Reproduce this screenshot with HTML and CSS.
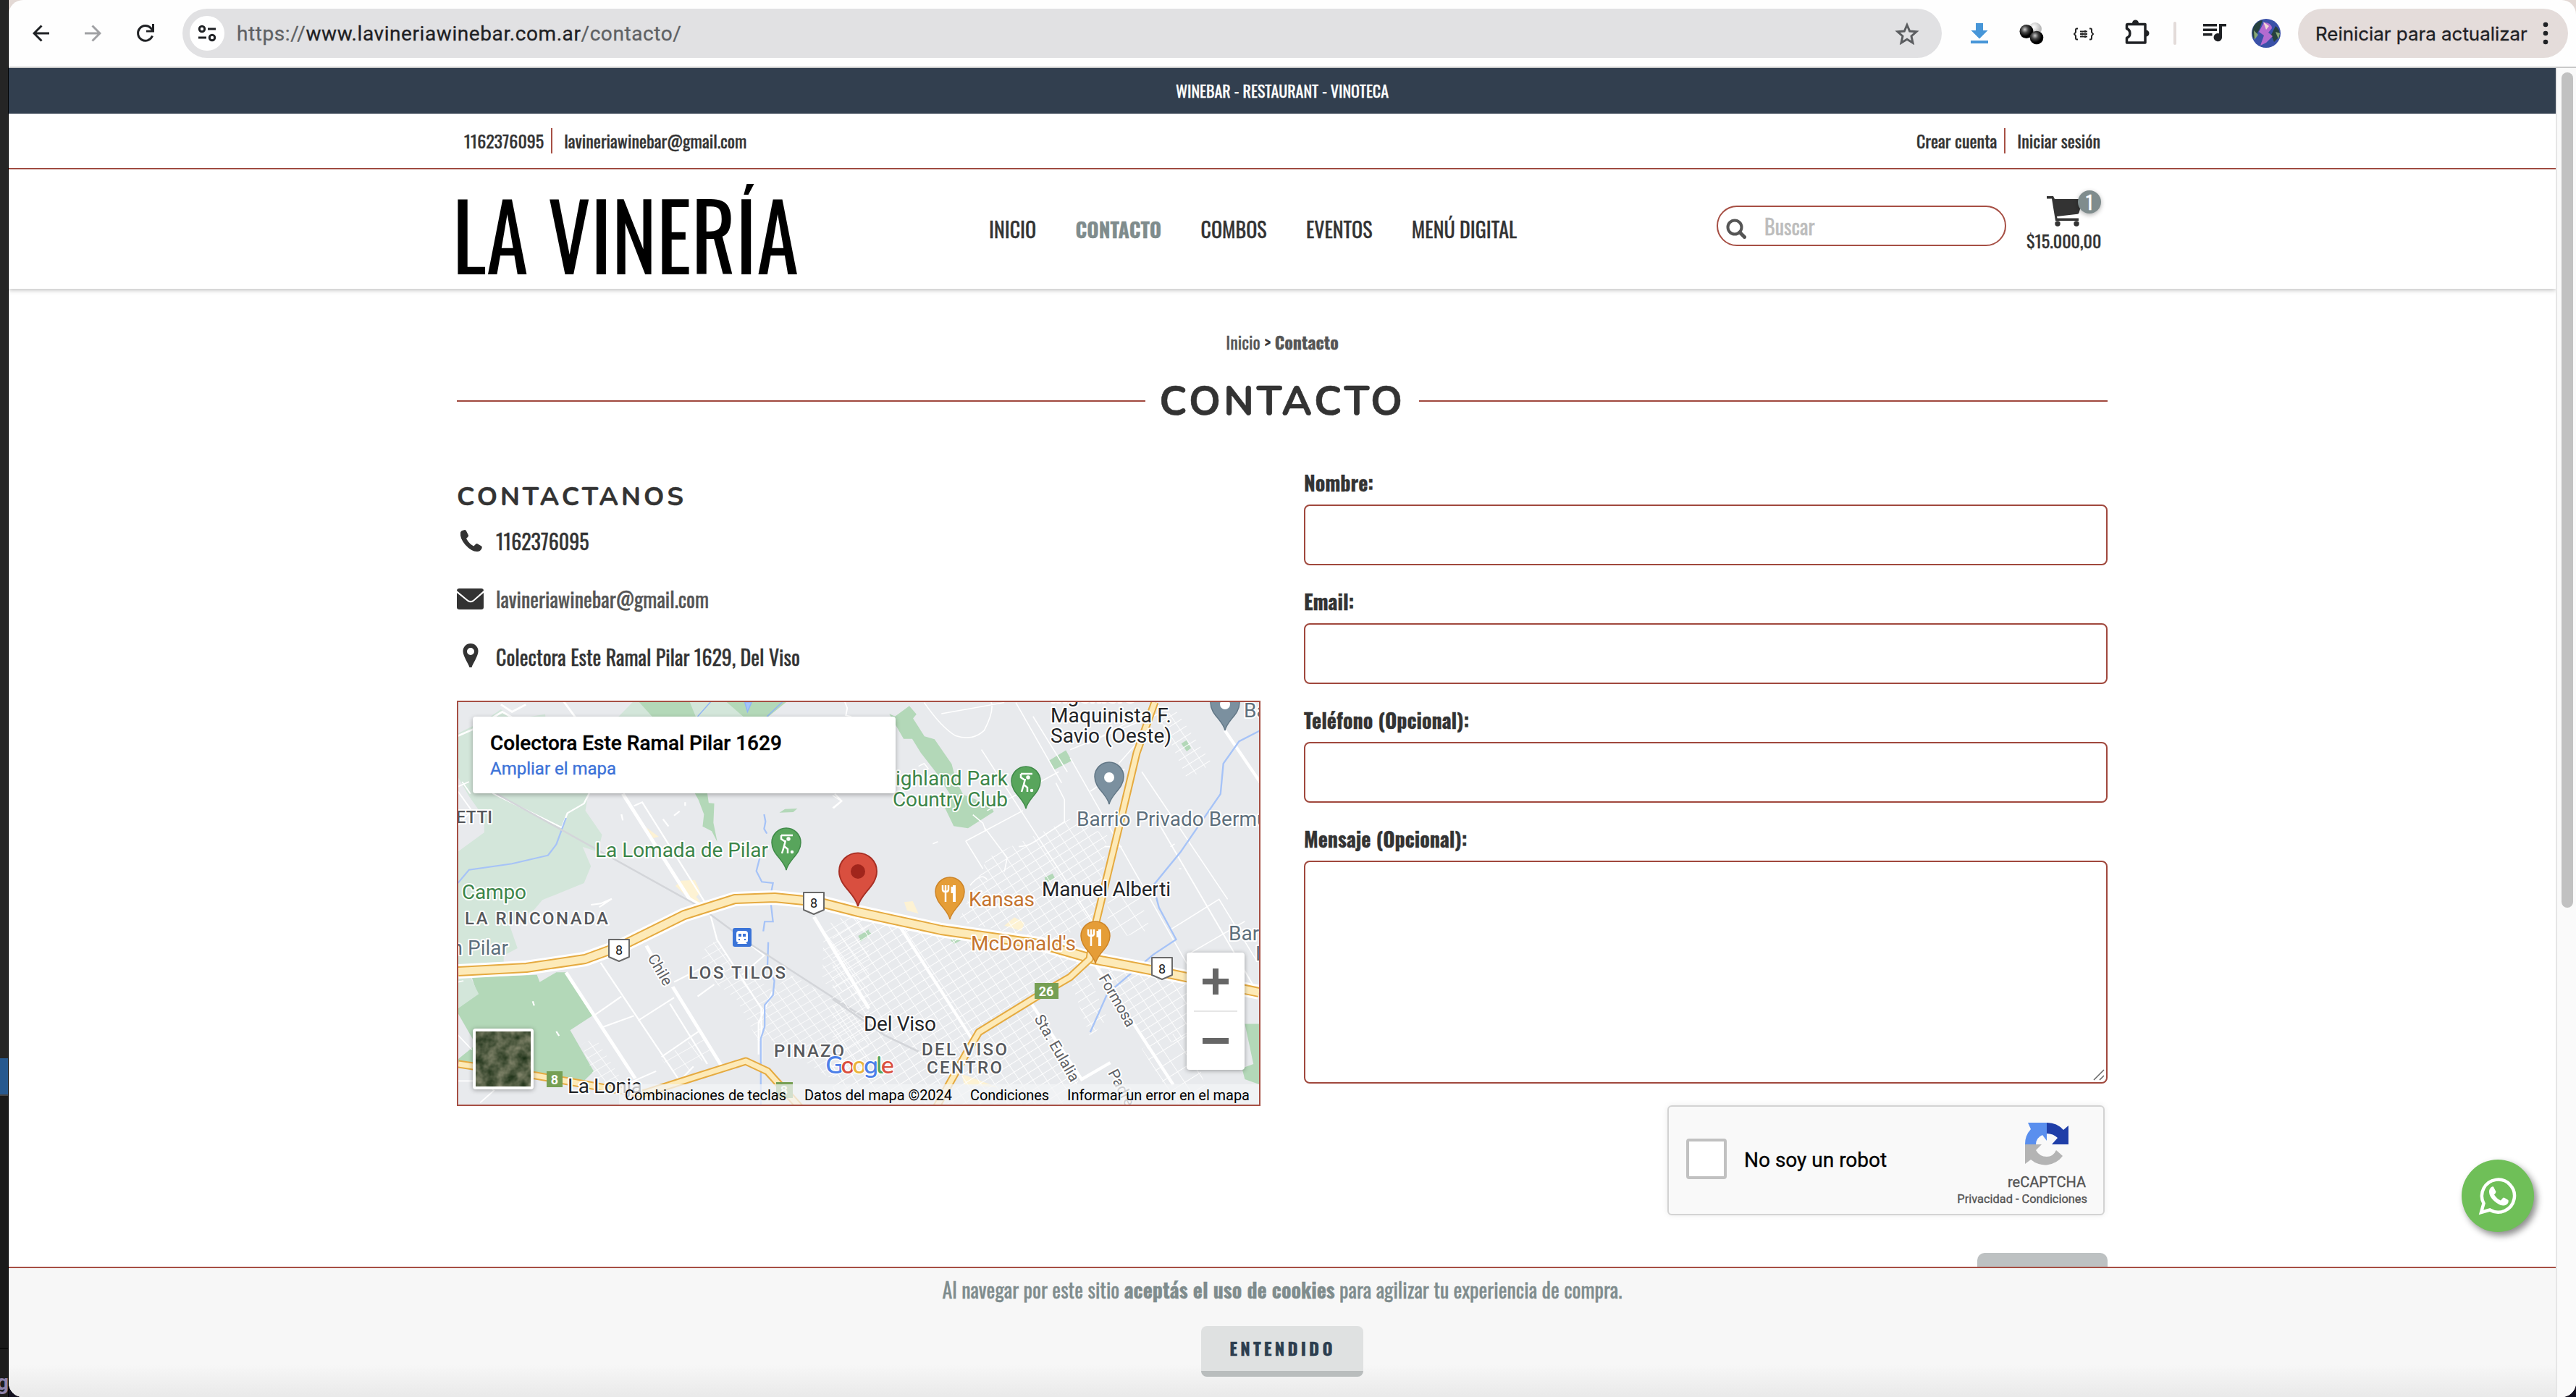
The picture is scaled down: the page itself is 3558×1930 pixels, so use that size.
FILE: index.html
```html
<!DOCTYPE html>
<html lang="es">
<head>
<meta charset="utf-8">
<title>Contacto - La Vinería</title>
<link rel="stylesheet" href="styles.css">
</head>
<body>
<aside class="desktop"><div class="desktop-top"></div><div class="desktop-blue"></div><div class="desktop-mid"></div><div class="desktop-foot">g</div></aside>
<div class="window">
  <div class="toolbar">
    <svg class="ic back" viewBox="0 0 24 24"><path d="M23 12H3M12.500 1.500L2 12l10.500 10.500" fill="none" stroke="#1f2124" stroke-width="3"/></svg>
    <svg class="ic fwd" viewBox="0 0 24 24"><path d="M1 12h20M11.500 1.500L22 12 11.500 22.500" fill="none" stroke="#a0a1a4" stroke-width="3"/></svg>
    <svg class="ic reload" viewBox="0 0 26 26"><path d="M22.500 16.500A10.300 10.300 0 1 1 20.500 6L23 9" fill="none" stroke="#1f2124" stroke-width="3"/><path d="M25 0v11.500H14V8.700h8V0z" fill="#1f2124"/></svg>
    <div class="omnibox">
      <span class="chip"><svg width="26" height="24" viewBox="0 0 26 24" fill="none" stroke="#1f2124" stroke-width="3"><circle cx="6" cy="6" r="3.700"/><path d="M14 6h11M1 18h11"/><circle cx="20" cy="18" r="3.700"/></svg></span>
      <span class="url">https://<b>www.lavineriawinebar.com.ar</b>/contacto/</span>
      <svg class="star" viewBox="0 0 34 32"><path d="M17 4.500l3.700 8.500 9.300.8-7 6.200 2 9.200-8-4.900-8 4.900 2-9.200-7-6.200 9.300-.8z" fill="none" stroke="#5b5d60" stroke-width="3"/></svg>
    </div>
    <svg class="exts" viewBox="2682 0 492 92">
      <defs><radialGradient id="bk" cx=".38" cy=".35"><stop offset="0" stop-color="#ccc"/><stop offset=".5" stop-color="#444"/><stop offset="1" stop-color="#000"/></radialGradient>
      <radialGradient id="wt" cx=".4" cy=".35"><stop offset="0" stop-color="#fff"/><stop offset="1" stop-color="#bbb"/></radialGradient></defs>
      <path d="M2729 32h10v10h6.500L2734 53.500 2722.500 42h6.500zM2722 56h24v4h-24z" fill="#4796d8"/>
      <circle cx="2811" cy="40" r="9" fill="url(#wt)"/><circle cx="2799" cy="43.500" r="9.500" fill="url(#bk)"/><circle cx="2813" cy="52" r="9.300" fill="url(#bk)"/>
      <g fill="none" stroke="#222" stroke-width="2"><path d="M2870 39.500h-1.500q-1.500 0-1.500 2v3l-2 2.500 2 2.500v3q0 2 1.500 2h1.500M2886 39.500h1.500q1.500 0 1.500 2v3l2 2.500-2 2.500v3q0 2-1.500 2h-1.500M2873 43.500h10M2873 47h10M2873 50.500h10"/><path d="M2880 42v3M2876 45.500v3M2880 49v3"/></g>
      <path d="M2939 33.500h24v25.500h-25.500v-6.500a7 7 0 0 0 0-13v-4.500q0-1.500 1.500-1.500z" fill="none" stroke="#1f2124" stroke-width="3.500" stroke-linejoin="round"/><path d="M2945 32a4.500 4.500 0 0 1 9 0zM2964 41.500a4.500 4.500 0 0 1 0 9z" fill="#1f2124"/>
      <rect x="3002" y="30" width="4" height="32" rx="2" fill="#e3dbd9"/>
      <path d="M3043 33h19v3.500h-19zM3043 39.500h19v3.500h-19zM3043 46h12.500v3.500H3043zM3065 33h10v3.500h-6v15a5.700 5.700 0 1 1-4-5.300z" fill="#1f2124"/>
      <circle cx="3130" cy="46" r="20" fill="#3a51a8"/><path d="M3113 36q6-8 12-8l-4 12-8 14q-4-9 0-18zM3143 36q6 4 6 14l-8 8-4-10z" fill="#26413f"/><path d="M3127 31q10 0 11 8l-5 6 6 5-9 9-8 4 5-14-7-5z" fill="#b46bd0"/><path d="M3126 30l8 6-4 5z" fill="#f0d6d4"/><path d="M3113 42l6 6-5 7zM3143 44l6 2-2 8z" fill="#88a878"/>
    </svg>
    <div class="update"><span>Reiniciar para actualizar</span><svg width="8" height="32" viewBox="0 0 8 32" fill="#1f2124"><circle cx="4" cy="4" r="3.300"/><circle cx="4" cy="16" r="3.300"/><circle cx="4" cy="28" r="3.300"/></svg></div>
  </div>

  <div class="viewport">
    <div class="page">
      <div class="promo">WINEBAR - RESTAURANT - VINOTECA</div>
      <div class="topbar"><div class="inner">
        <div class="links"><a>1162376095</a><a>lavineriawinebar@gmail.com</a></div>
        <div class="links"><a>Crear cuenta</a><a>Iniciar sesión</a></div>
      </div></div>
      <header class="header"><div class="inner">
        <svg class="logo" viewBox="0 0 472 125"><text x="-6" y="125" textLength="478" lengthAdjust="spacingAndGlyphs">LA VINERÍA</text></svg>
        <nav class="nav"><a>INICIO</a><a class="active">CONTACTO</a><a>COMBOS</a><a>EVENTOS</a><a>MENÚ DIGITAL</a></nav>
        <div class="search"><svg width="28" height="28" viewBox="0 0 28 28" fill="none" stroke="#555" stroke-width="4"><circle cx="12" cy="12" r="9.500"/><path d="M19 19l6.500 6.500" stroke-width="5" stroke-linecap="round"/></svg><span>Buscar</span></div>
        <div class="cart">
          <svg width="50" height="42" viewBox="0 0 50 42" fill="#333"><path d="M0 0h9l2 4h37q2 0 1.500 2l-5 17q-.5 1.500-2 1.700L14 28l.5 2.500H44V34H12L7 3.500H0z"/><circle cx="15" cy="38" r="3.700"/><circle cx="41" cy="38" r="3.700"/></svg>
          <span class="badge">1</span><span class="total">$15.000,00</span>
        </div>
      </div></header>

      <main class="inner main">
        <div class="crumbs"><a>Inicio</a> &gt; <b>Contacto</b></div>
        <h1 class="title"><span>CONTACTO</span></h1>
        <div class="cols">
          <section>
            <h2 class="subtitle">CONTACTANOS</h2>
            <div class="row"><svg viewBox="0 0 38 38"><path d="M5 8q0-3 6-4 1.500 0 2 1.500l3 6q.5 1.500-3 4.500 4.500 8 10.500 10.500 3-4 4.500-3.500l6 3.500q1.500 1 0 4-2 3.500-6 3.500Q20 34 11.500 24.500 4 15.500 5 8z"/></svg><span>1162376095</span></div>
            <div class="row mail"><svg viewBox="0 0 38 38"><path d="M3.500 5h30Q37 5 37 8L23 20.500q-4 3-8 0L0 8q0-3 3.500-3zM0 11l15 12q4 2.500 8 0L37 11v20q0 3-3.500 3h-30Q0 34 0 31z"/></svg><span>lavineriawinebar@gmail.com</span></div>
            <div class="row"><svg viewBox="0 0 38 38"><path fill-rule="evenodd" d="M19 1a10.500 10.500 0 0 1 10.500 11C29.500 18 22 29 20.500 34h-3C16 29 8.500 18 8.500 12A10.500 10.500 0 0 1 19 1zm0 6a5 5 0 1 0 0 10 5 5 0 0 0 0-10z"/></svg><span>Colectora Este Ramal Pilar 1629, Del Viso</span></div>

            <div class="map">
            <svg class="map-canvas" viewBox="633 970 1106 556">
              <defs>
                <path id="pin" d="M0 0C-3-14-20-22-20-38A20 20 0 1 1 20-38C20-22 3-14 0 0Z"/>
                <pattern id="g1" width="40" height="30" patternUnits="userSpaceOnUse" patternTransform="rotate(-33)"><path d="M0 0H40M0 0V30" fill="none" stroke="#fff" stroke-width="4.500"/></pattern>
                <pattern id="g2" width="60" height="46" patternUnits="userSpaceOnUse" patternTransform="rotate(-33)"><path d="M0 0H60M0 0V46" fill="none" stroke="#fff" stroke-width="4.500"/></pattern>
                <filter id="nz" x="0" y="0" width="1" height="1" color-interpolation-filters="sRGB"><feTurbulence type="fractalNoise" baseFrequency=".07" numOctaves="3" seed="4"/><feColorMatrix values=".6 0 0 0 .03 .5 0 0 0 .12 .5 0 0 0 .02 0 0 0 0 1"/></filter>
              </defs>
              <rect x="633" y="970" width="1106" height="556" fill="#e8eaed"/>
              <!-- parks, north-west -->
              <g transform="translate(600 640) scale(.3827 .3333)">
                <path d="M660 1055L720 985H1270L1200 1055z" fill="#d3e6da"/><path d="M735 985H920L945 1055H790zM1050 985H1275L1200 1055H1120z" fill="#b3d8b8"/>
                <path d="M85 1120L190 1060 240 1020 290 1060 400 1040 420 1380H85z" fill="#d3e6da"/>
                <path d="M240 1000l40 30 50-30M85 1130l60-30 100-70 60 40M465 985l45 70M85 1280l60 30" fill="none" stroke="#fff" stroke-width="8"/>
                <path d="M1120 990h25l-15 40zM1000 985l-50 65M1260 985l-60 65" fill="#a3c4fa" stroke="#90b4f4" stroke-width="4"/>
                <path d="M1480 985l10 30-5 30 20 5" fill="none" stroke="#fff" stroke-width="5"/>
              </g>
              <g transform="translate(600 1080) scale(.3827 .3333)">
                <path d="M85-60H570L545 120 605 220 590 290 535 270 565 350 540 420 390 490 360 530 270 590 300 690 250 720V770H85z" fill="#d3e6da"/>
                <path d="M85 -20L125 60 180 150V210L85 290z" fill="#e8eaed"/>
                <path d="M85 930L155 880 135 810 370 800 380 830 440 790 475 790 570 970 490 1030 575 1200 540 1240 85 1170z" fill="#b3d8b8"/>
                <path d="M85 940L160 880 130 810H85z" fill="#d3e6da"/><path d="M85 960L150 1090 85 1150z" fill="#e8eaed"/>
                <path d="M940 48h45l5 40 20 2-3 80 14 80-20-45-33-20 5-50-20-60zM1245 128l20-15 45-2-15 15zM1530 640l38-28v28l-30 22z" fill="#b3d8b8"/>
                <path d="M890 410l50-3 20 50-15 20 30 40-40-15-65-70zM765 190l45 38-20 5z" fill="#fdf2d3"/>
                <path d="M1405 600L1568 500V1000L1530 900 1400 830z" fill="url(#g1)"/>
                <path d="M955 710L1020 655 1080 760 1220 860 1290 800 1568 990V1200L1430 1230 1200 1060 1170 1080 1090 900 1020 840z" fill="url(#g1)"/>
                <path d="M530 1090L580 1060 690 1260H590z" fill="url(#g1)"/><path d="M900 1090L960 1040 1010 1120 880 1230 820 1150z" fill="url(#g2)"/>
                <path d="M85 40l50 80-50 60M85 20l40-20M100 0l30 50M85 1050l50 60M85 1240h90l40 40-50 50M85 830l20-5" fill="none" stroke="#fff" stroke-width="5"/>
                <path d="M475 790L725 1230M860 850L1040 1185M765 680L785 720M680 50L920 485 980 525M1370 560L1568 940" fill="none" stroke="#fff" stroke-width="13"/>
                <path d="M720 100l30-15 240 440 30 130 160 285v220M600 750L885 1240M575 970l100-80M735 990l130-95M600 1020l120-50M850 920L985 1170M820 1140l140-110M885 1240l50-60M865 830l120-70M950 890l60-50M1145 680l45 40-80 80M1220 870l-50 130v130M700 1250l100-50M1440 110l30-30-25-30M210 48L460 190l20-60 60-40 20-45M565 510l35-5 40-20-45 35M675 135l5 25M905 85v15M865 140l20-18M825 155l20 30M355 910l5 18M440 1035l10 18" fill="none" stroke="#fff" stroke-width="6"/>
                <path d="M85 420L125 365 280 340 410 305 440 260 475 150M1190 135l5 30-5 30 10 20M1180 290l-18 80 20 45 40 5-10 60 10 100-30 0-5 40M1205 665l-3 100 25 60-5 60-30 40v90l-14 50v275" fill="none" stroke="#a6c3f7" stroke-width="6"/>
                <path d="M225 50L960 520 1150 680 1568 990" fill="none" stroke="#d3d5d9" stroke-width="7"/>
              </g>
              <g transform="translate(1150 940) scale(.3954 .3827)">
                <path d="M218 130l50-38 25 30-12 15 40 65 35 10 60 90 15 60 25 50 75 30 12-8 20 40-90 60-50-8-35-75 25-35-45-75-60-80-30-50h-30l-50-90z" fill="#b3d8b8"/>
                <path d="M755 290l60-38 20 38-60 32zM1218 228l18-12 16 28-15 12zM740 712l28-15 8 15-28 20zM90 922l35-18 10 10-35 26zM412 938l60-25 3 10-50 28zM1440 1240h55v220l-55-20-10-40 40-15z" fill="#b3d8b8"/>
                <path d="M250 800l30-3 20 45-40-12zM600 885l35-30 35 20-10 30zM450 1420l130 50-120-10z" fill="#fdf2d3"/>
                <path d="M0 900L60 860 230 880 400 910 640 930 880 1000 830 1075 520 1265 400 1500 330 1530H0z" fill="url(#g1)"/>
                <path d="M540 640L830 500 960 560 940 720 900 880 760 940 440 870z" fill="url(#g1)"/>
                <path d="M530 1280L700 1170 860 1440 830 1530H400z" fill="url(#g1)"/><path d="M830 1080L880 1030 960 1220 900 1290z" fill="url(#g1)"/>
                <path d="M920 1020L1115 1050 1240 1080V1290L1100 1330 1050 1240z" fill="url(#g1)"/><path d="M1080 1330L1240 1250 1320 1530H1200z" fill="url(#g2)"/>
                <path d="M960 760L1060 740 1110 900 960 940z" fill="url(#g2)"/>
                <path d="M1140 130L1200 110 1325 300 1240 360z" fill="url(#g1)"/>
                <path d="M1130 500L1480 1120" fill="none" stroke="#fff" stroke-width="5"/>
                <path d="M230 880L490 1300M690 1160L870 1440 970 1380M920 1030L1190 1460M1370 180L1495 370" fill="none" stroke="#fff" stroke-width="11"/>
                <path d="M320 80q60 90 110 120 60 20 100-20 40-80 20-110M520 250l400 640M380 120L600 80M540 470l250-140M465 580l60 100M465 580l200-110M600 690l10-50-80-110M650 600q30 0 60-20l100-70V430l-30-60M830 250l310-130M830 280l450 820M1080 330l300 460M900 400l120-80M1000 300l60-70M1140 90l-250 140M640 80l160 290M700 130l120 200M300 310l20-10 15 20M350 590l18-8M490 485l35 30 10 30M480 740q40-50 60-20M0 415l30 20-30 25M950 600h60M1180 600l15-10M1210 680h8M1180 900l170-110 130 220M1240 990l200-120" fill="none" stroke="#fff" stroke-width="4"/>
                <path d="M1495 180L1420 220 1365 300 1355 410 1215 620 1120 740 1140 820 1200 935 1120 990 960 1130 900 1270" fill="none" stroke="#a6c3f7" stroke-width="6"/>
                <path d="M0 1150L180 1280 300 1340" fill="none" stroke="#d3d5d9" stroke-width="7"/>
              </g>
              <!-- highways -->
              <g fill="none" stroke-linejoin="round">
                <g><path d="M633 1342L727 1337 808 1325 860 1306 945 1264 1015 1242 1070 1240 1130 1246 1185 1260 1300 1285 1440 1305 1510 1325 1610 1344 1739 1371" stroke="#fff" stroke-width="20"/><path d="M633 1342L727 1337 808 1325 860 1306 945 1264 1015 1242 1070 1240 1130 1246 1185 1260 1300 1285 1440 1305 1510 1325 1610 1344 1739 1371" stroke="#e5aa40" stroke-width="14"/><path d="M633 1342L727 1337 808 1325 860 1306 945 1264 1015 1242 1070 1240 1130 1246 1185 1260 1300 1285 1440 1305 1510 1325 1610 1344 1739 1371" stroke="#fdeab8" stroke-width="10"/></g>
                <path d="M1595 970L1570 1040 1545 1145 1510 1290 1505 1325 1478 1350 1430 1378 1352 1426 1336 1453 1293 1530M633 1470L740 1486 830 1502 888 1511 960 1488 1030 1466 1060 1480 1105 1530" stroke="#e5aa40" stroke-width="11"/>
                <path d="M1595 970L1570 1040 1545 1145 1510 1290 1505 1325 1478 1350 1430 1378 1352 1426 1336 1453 1293 1530M633 1470L740 1486 830 1502 888 1511 960 1488 1030 1466 1060 1480 1105 1530" stroke="#fdeab8" stroke-width="7"/>
              </g>
              <!-- road shields -->
              <g class="shield">
                <path d="M841 1298h28v24l-14 6-14-6z"/><path d="M1110 1233h28v24l-14 6-14-6z"/><path d="M1591 1323h28v24l-14 6-14-6z"/>
              </g>
              <g class="num"><text x="855" y="1319">8</text><text x="1124" y="1254">8</text><text x="1605" y="1345">8</text></g>
              <path d="M1429 1358h33v22h-33zM755 1480h22v22h-22zM1072 1495h23v22h-23z" fill="#769f54"/>
              <g class="num green"><text x="1445" y="1376">26</text><text x="766" y="1498">8</text><text x="1083" y="1513">8</text></g>
              <!-- place labels -->
              <g class="town">
                <text x="1451" y="970" textLength="118">Ingeniero</text><text x="1451" y="998" textLength="167">Maquinista F.</text><text x="1451" y="1026" textLength="167">Savio (Oeste)</text>
                <text x="1439" y="1238" textLength="178">Manuel Alberti</text><text x="1193" y="1424" textLength="100">Del Viso</text><text x="784" y="1510" textLength="103">La Lonja</text>
              </g>
              <g class="area"><text x="597" y="1137" textLength="83">CHETTI</text><text x="642" y="1277" textLength="198">LA RINCONADA</text><text x="951" y="1352" textLength="134">LOS TILOS</text><text x="1069" y="1460" textLength="97">PINAZO</text><text x="1273" y="1458" textLength="118">DEL VISO</text><text x="1280" y="1483" textLength="104">CENTRO</text></g>
              <g class="park"><text x="1217" y="1085" textLength="175">Highland Park</text><text x="1233" y="1114" textLength="159">Country Club</text><text x="822" y="1184" textLength="239">La Lomada de Pilar</text><text x="638" y="1242" textLength="89">Campo</text></g>
              <g class="gray"><text x="1487" y="1141">Barrio Privado Bermudas</text><text x="1718" y="991">Barrio</text><text x="1697" y="1299">Barrio</text><text x="1734" y="1327">L</text><text x="702" y="1319" text-anchor="end">San Pilar</text></g>
              <g class="food"><text x="1338" y="1252" textLength="91">Kansas</text><text x="1341" y="1313" textLength="145">McDonald's</text></g>
              <g class="street"><text transform="translate(894 1323) rotate(60)">Chile</text><text transform="translate(1517 1351) rotate(60)" textLength="80">Formosa</text><text transform="translate(1428 1407) rotate(60)">Sta. Eulalia</text><text transform="translate(1530 1482) rotate(62)">Padre</text></g>
              <!-- pins -->
              <g stroke-width="1.500">
                <use href="#pin" x="1417" y="1117" fill="#58a55c" stroke="#3f8a48"/><use href="#pin" x="1086" y="1202" fill="#58a55c" stroke="#3f8a48"/>
                <use href="#pin" x="1532" y="1111" fill="#7b909f" stroke="#627786"/><use href="#pin" x="1692" y="1009" fill="#7b909f" stroke="#627786"/>
                <use href="#pin" x="1312" y="1270" fill="#e59d37" stroke="#cd8427"/><use href="#pin" x="1513" y="1331" fill="#e59d37" stroke="#cd8427"/>
                <use href="#pin" transform="translate(1185 1252) scale(1.300 1.270)" fill="#d94f3f" stroke="#a82f24"/>
              </g>
              <circle cx="1185" cy="1204" r="10" fill="#a1251c"/><circle cx="1532" cy="1074" r="7" fill="#fff"/><circle cx="1692" cy="973" r="7" fill="#fff"/>
              <g stroke="#fff" fill="none" stroke-width="2.500"><g id="gf"><path d="M1410 1069h16M1410 1069v5l6 4M1416 1076l-2 8 5 4v6M1414 1084l-3 10" /><circle cx="1420" cy="1074" r="1.500"/><circle cx="1425" cy="1092" r="1" /></g><use href="#gf" x="-331" y="85"/></g>
              <g fill="none" stroke="#fff"><g id="fk"><path d="M1302 1223v6q0 3 4 3 4 0 4-3v-6M1306 1223v23" stroke-width="2.500"/><path d="M1318 1223v23" stroke-width="4"/><path d="M1315 1225v9" stroke-width="3"/></g><use href="#fk" x="201" y="61"/></g>
              <rect x="1012" y="1282" width="26" height="26" rx="3" fill="#3b74d8"/><path fill-rule="evenodd" d="M1021 1286h8q4 0 4 4v9q0 3-3 3l2 2h-14l2-2q-3 0-3-3v-9q0-4 4-4zm-1 4v4h4v-4zm6 0v4h4v-4zm-6 7v2h2v-2zm8 0v2h2v-2z" fill="#fff"/>
              <g class="google"><text x="1140" y="1483" textLength="95"><tspan fill="#4c80e8">G</tspan><tspan fill="#d94f3f">o</tspan><tspan fill="#eab43c">o</tspan><tspan fill="#4c80e8">g</tspan><tspan fill="#58a55c">l</tspan><tspan fill="#d94f3f">e</tspan></text></g>
              <path d="M855 1498h884v28H855z" fill="#f3f4f5" opacity=".75"/>
              <g class="legal"><text x="863" y="1520" textLength="223">Combinaciones de teclas</text><text x="1111" y="1520" textLength="204">Datos del mapa ©2024</text><text x="1340" y="1520" textLength="109">Condiciones</text><text x="1474" y="1520" textLength="252">Informar un error en el mapa</text></g>
              <rect class="lift" x="653" y="1421" width="84" height="84" rx="4" fill="#fff"/><rect x="657" y="1425" width="76" height="76" fill="#56634e" filter="url(#nz)"/>
              <rect class="lift" x="1639" y="1316" width="80" height="162" rx="4" fill="#fff"/><path d="M1649 1397h60" stroke="#e6e6e6" stroke-width="2"/><path d="M1661 1356h36M1679 1338v36M1661 1438h36" stroke="#666" stroke-width="8"/>
            </svg>
            <div class="place"><strong>Colectora Este Ramal Pilar 1629</strong><a>Ampliar el mapa</a></div>
            </div>
          </section>

          <form class="form">
            <label>Nombre:</label><div class="input"></div>
            <label>Email:</label><div class="input"></div>
            <label>Teléfono (Opcional):</label><div class="input"></div>
            <label>Mensaje (Opcional):</label><div class="input area-in"><svg width="16" height="16" viewBox="0 0 16 16" stroke="#666" stroke-width="1.500"><path d="M1 15L15 1M9 15l6-6"/></svg></div>
            <div class="captcha">
              <span class="check"></span><span class="robot">No soy un robot</span>
              <div class="brand">
                <svg width="62" height="62" viewBox="0 0 62 62"><path d="M31 1A30 30 0 0 1 54 11l7-6v26H38l8-9Q40 16 31 16z" fill="#1f3ea8"/><path d="M1 31A30 30 0 0 1 9 10L5 1h26v25l-6-8q-9 4-9 13z" fill="#5a8fee"/><path d="M1 31h23l-8 8q5 9 15 9 9 0 13-9l9 8A30 30 0 0 1 9 52l-8 6z" fill="#b4b4b4"/></svg>
                <span>reCAPTCHA</span><small>Privacidad - Condiciones</small>
              </div>
            </div>
            <div class="submit"></div>
          </form>
        </div>
      </main>
      <div class="cookies"><p>Al navegar por este sitio <b>aceptás el uso de cookies</b> para agilizar tu experiencia de compra.</p><span class="ok">ENTENDIDO</span></div>
      <div class="wa"><svg width="54" height="54" viewBox="0 0 54 54"><path d="M4 50l3.500-12.500A22.500 22.500 0 1 1 16 46.500z" fill="none" stroke="#fff" stroke-width="4.500"/><path d="M17 16q2-2.500 4-1.500l3.500 7q0 1.500-2.500 4 4 6 9 8l3-3.500q1-1 2.500 0l5 3q1 4-3 6.500-5 3-13-2.500T15.500 25q-1.500-6 1.500-9z" fill="#fff"/></svg></div>
    </div>
    <div class="scroll"><div class="thumb"></div></div>
  </div>
</div>
</body>
</html>
```
FILE: styles.css
```css
* { box-sizing: border-box; }
body {
  margin: 0;
  width: 3558px;
  height: 1930px;
  overflow: hidden;
  display: flex;
  background: #12101f;
  color: #333;
  font-family: Oswald, "Open Sans", sans-serif;
  font-size: 28px;
}
svg { display: block; flex: none; }

/* desktop sliver at the left */
.desktop { width: 12px; height: 1930px; border-right: 1px solid #000; overflow: hidden; flex: none; }
.desktop-top { height: 1462px; background: #252525; }
.desktop-blue { height: 52px; background: #27598f; border-bottom: 2px solid #444; }
.desktop-mid { height: 348px; background: #1a1a1a; }
.desktop-foot { height: 68px; border-top: 2px solid #0c0c0c; background: #1d1d1d; color: #8e83ab; font: 700 30px/92px Roboto, sans-serif; text-indent: -5px; }

.window { flex: 1; height: 1930px; display: flex; flex-direction: column; background: #e3d9d5; border-radius: 0 0 20px 20px; overflow: hidden; }
.toolbar { height: 94px; padding: 12px 11px 0 33px; border-bottom: 2px solid #c9c9c9; background: #fefefe; border-radius: 20px 20px 0 0; display: flex; align-items: flex-start; flex: none; font-family: Inter, sans-serif; -webkit-text-stroke: .3px; }
.ic { width: 24px; height: 24px; margin-top: 22px; }
.fwd { margin-left: 47px; }
.reload { width: 26px; height: 26px; margin: 21px 38px 0 48px; }
.omnibox { width: 2430px; height: 68px; border-radius: 34px; background: #e1e1e3; display: flex; align-items: center; padding: 0 31px 0 10px; }
.chip { width: 48px; height: 48px; border-radius: 50%; background: #fff; display: flex; align-items: center; justify-content: center; }
.url { margin-left: 17px; font: 28px Roboto, sans-serif; letter-spacing: .58px; color: #5f6164; }
.url b { font-weight: 400; color: #1f2124; }
.star { width: 34px; height: 32px; margin-left: auto; }
.exts { width: 492px; height: 92px; margin-top: -12px; }
.update { width: 373px; height: 68px; border-radius: 34px; background: #e4dcda; display: flex; align-items: center; justify-content: space-between; padding: 1px 27px 0 24px; font-size: 25.9px; color: #1f2124; white-space: nowrap; }
.update svg { margin-top: -1px; }

.viewport { flex: 1; display: flex; background: #fff; }
.page { position: relative; width: 3518px; height: 1836px; overflow: hidden; background: #fff; -webkit-text-stroke: .35px; }
.scroll { width: 28px; border-left: 2px solid #e6e6e6; background: #fafafa; padding: 6px 0 0 6px; }
.thumb { width: 16px; height: 1154px; border-radius: 8px; background: #c1c1c1; }
.inner { width: 2280px; margin: 0 auto; }

.promo { height: 63px; background: #323f4f; color: #fff; font-size: 22px; line-height: 63px; text-align: center; }
.topbar { height: 77px; border-bottom: 2px solid #a64f44; font-size: 24px; }
.topbar .inner { height: 75px; display: flex; justify-content: space-between; align-items: center; }
.links { display: flex; line-height: 35px; }
.links a { padding: 0 10px; }
.links a + a { border-left: 2px solid #a64f44; padding-left: 16px; }

.header { height: 165px; box-shadow: 0 2px 6px rgba(0, 0, 0, .25); }
.header .inner { height: 165px; display: flex; align-items: center; }
.logo { width: 472px; height: 125px; overflow: visible; clip-path: inset(0 -10px -10px -10px); }
.logo text { font-family: Oswald, sans-serif; font-weight: 380; font-size: 128px; fill: #000; stroke: none; }
.nav { display: flex; gap: 54.4px; margin-left: 263px; padding-bottom: 1px; }
.nav .active { font-weight: 700; color: #7f8c8d; }
.search { width: 400px; height: 56px; margin: 0 28px 10px auto; border: 2px solid #a64f44; border-radius: 28px; display: flex; align-items: center; padding: 0 11px; color: #bdbdbd; }
.search svg { margin-top: 8px; }
.search span { margin: 1px 0 0 25px; }
.cart { position: relative; width: 112px; height: 92px; padding-left: 28px; display: block; }
.cart .badge { position: absolute; left: 71px; top: -8px; width: 32px; height: 32px; border-radius: 50%; background: #7f8c8d; color: #fff; font-size: 26px; line-height: 31px; text-align: center; box-shadow: 0 2px 6px rgba(0, 0, 0, .3); }
.cart .total { display: block; margin: 1px 0 0 -28px; font-size: 24px; line-height: 36px; }

.main { padding-top: 55px; }
.crumbs { text-align: center; font-size: 24px; line-height: 36px; }
.crumbs a { font-weight: 400; }
.crumbs a, .crumbs b { color: #555; }
.title { height: 70px; margin: 29px 0 0; display: flex; align-items: center; gap: 19px; font: 700 56px/70px Nunito, sans-serif; letter-spacing: 4px; color: #333; -webkit-text-stroke: .6px; }
.title span { padding-top: 2px; }
.title::before, .title::after { content: ""; flex: 1; height: 2px; background: #a0483d; }
.cols { display: flex; gap: 60px; margin-top: 56px; }
.cols > * { width: 1110px; }
.subtitle { margin: 22px 0 0; font: 700 36px/40px Nunito, sans-serif; letter-spacing: 4px; }
.row { height: 80px; display: flex; align-items: center; gap: 16px; }
.row svg { width: 38px; height: 38px; fill: #333; }
.row.mail span { color: #555; }

.map { position: relative; margin-top: 21px; height: 560px; border: 2px solid #a64f44; overflow: hidden; }
.map-canvas { width: 1106px; height: 556px; }
.place { position: absolute; left: 20px; top: 20px; width: 584px; height: 106px; border-radius: 4px; background: #fff; box-shadow: 0 2px 6px rgba(0, 0, 0, .3); padding: 19px 24px; font-family: Roboto, sans-serif; display: flex; flex-direction: column; }
.place strong { font-weight: 500; font-size: 28px; line-height: 36px; color: #000; }
.place a { font-size: 24px; line-height: 34px; color: #3c72d8; }
.map-canvas text { font-family: Roboto, sans-serif; font-size: 28px; paint-order: stroke; stroke: #fff; stroke-width: 4px; stroke-linejoin: round; }
.town { fill: #222427; }
.map-canvas .area text { font-size: 24px; font-weight: 500; fill: #56585c; }
.park { fill: #3c8549; }
.gray { fill: #5d6f7c; }
.food { fill: #c4742f; }
.map-canvas .street text { font-size: 21px; fill: #606266; }
.shield path { fill: #fff; stroke: #6a6a6a; stroke-width: 2; stroke-linejoin: round; }
.map-canvas .num text { font-size: 18px; text-anchor: middle; fill: #222; stroke: none; }
.map-canvas .green text { fill: #fff; font-weight: 700; }
.map-canvas .google text { font-family: Nunito, sans-serif; font-weight: 600; font-size: 34px; stroke-width: 3px; }
.map-canvas .legal text { font-size: 20px; fill: #000; stroke: none; }
.lift { filter: drop-shadow(0 1px 3px rgba(0, 0, 0, .35)); }

.form { display: flex; flex-direction: column; }
.form label { line-height: 44px; margin-bottom: 8px; font-weight: 700; }
.input { height: 84px; margin-bottom: 28px; border: 2px solid #a0483d; border-radius: 8px; background: #fff; }
.area-in { height: 308px; margin-bottom: 30px; display: flex; align-items: flex-end; justify-content: flex-end; padding: 2px; }
.captcha { width: 604px; height: 152px; margin: 0 4px 52px auto; border: 2px solid #d3d3d3; border-radius: 6px; background: #f9f9f9; box-shadow: 0 0 8px rgba(0, 0, 0, .08); display: flex; align-items: center; padding: 0 22px 0 24px; font-family: Roboto, sans-serif; }
.check { width: 56px; height: 56px; margin-bottom: 4px; border: 4px solid #c1c1c1; border-radius: 4px; background: #fff; }
.robot { margin: 0 0 2px 24px; color: #000; }
.brand { margin-left: auto; display: flex; flex-direction: column; align-items: flex-end; color: #555; padding-top: 6px; }
.brand svg { margin: 4px 25px 7px 0; }
.brand span { font-size: 20px; line-height: 28px; padding-right: 2px; }
.brand small { font-size: 16.4px; line-height: 20px; }
.submit { align-self: flex-end; width: 180px; height: 80px; border-radius: 10px; background: #bdc1c2; }

.cookies { position: absolute; left: 0; right: 0; bottom: 0; height: 180px; border-top: 2px solid #a64f44; background: linear-gradient(#f7f7f7 75%, #e9e9e9); text-align: center; color: #7f8c8d; }
.cookies p { margin: 8px 0 29px; line-height: 43px; }
.ok { display: block; width: 224px; height: 70px; margin: 0 auto; border-radius: 8px; border-bottom: 8px solid #b9bdbd; background: #dfe1e1; color: #2c3e50; font-weight: 700; font-size: 24px; line-height: 60px; letter-spacing: 4.2px; text-indent: 1px; }
.wa { position: absolute; left: 3388px; top: 1508px; width: 100px; height: 100px; border-radius: 50%; background: #6fbf58; box-shadow: 4px 5px 10px rgba(0, 0, 0, .45); display: flex; align-items: center; justify-content: center; }
```
